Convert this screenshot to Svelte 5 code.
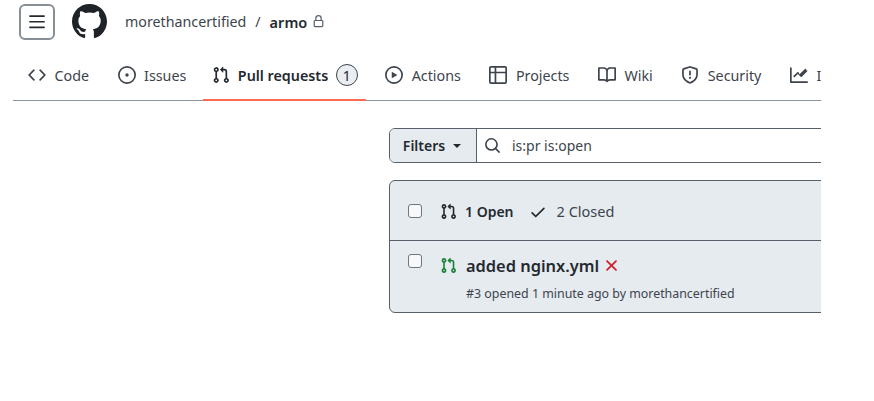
<script>
  const P = {
    code: "m11.28 3.22 4.25 4.25a.75.75 0 0 1 0 1.06l-4.25 4.25a.749.749 0 0 1-1.275-.326.749.749 0 0 1 .215-.734L13.94 8l-3.72-3.72a.749.749 0 0 1 .326-1.275.749.749 0 0 1 .734.215Zm-6.56 0a.751.751 0 0 1 1.042.018.751.751 0 0 1 .018 1.042L2.06 8l3.72 3.72a.749.749 0 0 1-.326 1.275.749.749 0 0 1-.734-.215L.47 8.53a.75.75 0 0 1 0-1.06Z",
    issue: "M8 9.5a1.5 1.5 0 1 0 0-3 1.5 1.5 0 0 0 0 3ZM8 0a8 8 0 1 1 0 16A8 8 0 0 1 8 0ZM1.5 8a6.5 6.5 0 1 0 13 0 6.5 6.5 0 0 0-13 0Z",
    pr: "M1.5 3.25a2.25 2.25 0 1 1 3 2.122v5.256a2.251 2.251 0 1 1-1.5 0V5.372A2.25 2.25 0 0 1 1.5 3.25Zm5.677-.177L9.573.677A.25.25 0 0 1 10 .854V2.5h1A2.5 2.5 0 0 1 13.5 5v5.628a2.251 2.251 0 1 1-1.5 0V5a1 1 0 0 0-1-1h-1v1.646a.25.25 0 0 1-.427.177L7.177 3.427a.25.25 0 0 1 0-.354ZM3.75 2.5a.75.75 0 1 0 0 1.5.75.75 0 0 0 0-1.5Zm0 9.5a.75.75 0 1 0 0 1.5.75.75 0 0 0 0-1.5Zm8.25.75a.75.75 0 1 0 1.5 0 .75.75 0 0 0-1.5 0Z",
    play: "M8 0a8 8 0 1 1 0 16A8 8 0 0 1 8 0ZM1.5 8a6.5 6.5 0 1 0 13 0 6.5 6.5 0 0 0-13 0Zm4.879-2.773 4.264 2.559a.25.25 0 0 1 0 .428l-4.264 2.559A.25.25 0 0 1 6 10.559V5.442a.25.25 0 0 1 .379-.215Z",
    table: "M0 1.75C0 .784.784 0 1.75 0h12.5C15.216 0 16 .784 16 1.75v12.5A1.75 1.75 0 0 1 14.25 16H1.75A1.75 1.75 0 0 1 0 14.25ZM6.5 6.5v8h7.75a.25.25 0 0 0 .25-.25V6.5Zm8-1.5V1.75a.25.25 0 0 0-.25-.25H6.5V5Zm-13 1.5v7.75c0 .138.112.25.25.25H5v-8ZM5 5V1.5H1.75a.25.25 0 0 0-.25.25V5Z",
    book: "M0 1.75A.75.75 0 0 1 .75 1h4.253c1.227 0 2.317.59 3 1.501A3.743 3.743 0 0 1 11.006 1h4.245a.75.75 0 0 1 .75.75v10.5a.75.75 0 0 1-.75.75h-4.507a2.25 2.25 0 0 0-1.591.659l-.622.621a.75.75 0 0 1-1.06 0l-.622-.621A2.25 2.25 0 0 0 5.258 13H.75a.75.75 0 0 1-.75-.75Zm7.251 10.324.004-5.073-.002-2.253A2.25 2.25 0 0 0 5.003 2.5H1.5v9h3.757a3.75 3.75 0 0 1 1.994.574ZM8.755 4.75l-.004 7.322a3.752 3.752 0 0 1 1.992-.572H14.5v-9h-3.495a2.25 2.25 0 0 0-2.25 2.25Z",
    shield: "M7.467.133a1.748 1.748 0 0 1 1.066 0l5.25 1.68A1.75 1.75 0 0 1 15 3.48V7c0 1.566-.32 3.182-1.303 4.682-.983 1.498-2.585 2.813-5.032 3.855a1.697 1.697 0 0 1-1.33 0c-2.447-1.042-4.049-2.357-5.032-3.855C1.32 10.182 1 8.566 1 7V3.48a1.75 1.75 0 0 1 1.217-1.667Zm.61 1.429a.25.25 0 0 0-.153 0l-5.25 1.68a.25.25 0 0 0-.174.238V7c0 1.358.275 2.666 1.057 3.86.784 1.194 2.121 2.34 4.366 3.297a.196.196 0 0 0 .154 0c2.245-.956 3.582-2.104 4.366-3.298C13.225 9.666 13.5 8.36 13.5 7V3.48a.251.251 0 0 0-.174-.237l-5.25-1.68ZM8.75 4.75v3a.75.75 0 0 1-1.5 0v-3a.75.75 0 0 1 1.5 0ZM9 10.5a1 1 0 1 1-2 0 1 1 0 0 1 2 0Z",
    graph: "M1.5 1.75V13.5h13.75a.75.75 0 0 1 0 1.5H.75a.75.75 0 0 1-.75-.75V1.75a.75.75 0 0 1 1.5 0Zm14.28 2.53-5.25 5.25a.75.75 0 0 1-1.06 0L7 7.06 4.28 9.78a.751.751 0 0 1-1.042-.018.751.751 0 0 1-.018-1.042l3.25-3.25a.75.75 0 0 1 1.06 0L8.5 7.44l4.72-4.72a.751.751 0 0 1 1.042.018.751.751 0 0 1 .018 1.042Z",
    lock: "M4 4a4 4 0 0 1 8 0v2h.25c.966 0 1.75.784 1.75 1.75v5.5A1.75 1.75 0 0 1 12.25 15h-8.5A1.75 1.75 0 0 1 2 13.25v-5.5C2 6.784 2.784 6 3.75 6H4Zm8.25 3.5h-8.5a.25.25 0 0 0-.25.25v5.5c0 .138.112.25.25.25h8.5a.25.25 0 0 0 .25-.25v-5.5a.25.25 0 0 0-.25-.25ZM10.5 6V4a2.5 2.5 0 1 0-5 0v2Z",
    github: "M8 0c4.42 0 8 3.58 8 8a8.013 8.013 0 0 1-5.45 7.59c-.4.08-.55-.17-.55-.38 0-.27.01-1.13.01-2.2 0-.75-.25-1.23-.54-1.48 1.78-.2 3.65-.88 3.65-3.95 0-.88-.31-1.59-.82-2.15.08-.2.36-1.02-.08-2.12 0 0-.67-.22-2.2.82-.64-.18-1.32-.27-2-.27-.68 0-1.36.09-2 .27-1.53-1.03-2.2-.82-2.2-.82-.44 1.1-.16 1.92-.08 2.12-.51.56-.82 1.28-.82 2.15 0 3.06 1.86 3.75 3.64 3.95-.23.2-.44.55-.51 1.07-.46.21-1.61.55-2.33-.66-.15-.24-.6-.83-1.23-.82-.67.01-.27.38.01.53.34.19.73.9.82 1.13.16.45.68 1.31 2.69.94 0 .67.01 1.3.01 1.49 0 .21-.15.45-.55.38A7.995 7.995 0 0 1 0 8c0-4.42 3.58-8 8-8Z",
    search: "M10.68 11.74a6 6 0 0 1-7.922-8.982 6 6 0 0 1 8.982 7.922l3.04 3.04a.749.749 0 0 1-.326 1.275.749.749 0 0 1-.734-.215ZM11.5 7a4.499 4.499 0 1 0-8.997 0A4.499 4.499 0 0 0 11.5 7Z",
    check: "M13.78 4.22a.75.75 0 0 1 0 1.06l-7.25 7.25a.75.75 0 0 1-1.06 0L2.22 9.28a.751.751 0 0 1 .018-1.042.751.751 0 0 1 1.042-.018L6 10.94l6.72-6.72a.75.75 0 0 1 1.06 0Z",
    x: "M3.72 3.72a.75.75 0 0 1 1.06 0L8 6.94l3.22-3.22a.749.749 0 0 1 1.275.326.749.749 0 0 1-.215.734L9.06 8l3.22 3.22a.749.749 0 0 1-.326 1.275.749.749 0 0 1-.734-.215L8 9.06l-3.22 3.22a.751.751 0 0 1-1.042-.018.751.751 0 0 1-.018-1.042L6.94 8 3.72 4.78a.75.75 0 0 1 0-1.06Z",
    bars: "M1 2.75A.75.75 0 0 1 1.75 2h12.5a.75.75 0 0 1 0 1.5H1.75A.75.75 0 0 1 1 2.75Zm0 5A.75.75 0 0 1 1.75 7h12.5a.75.75 0 0 1 0 1.5H1.75A.75.75 0 0 1 1 7.75ZM1.75 12h12.5a.75.75 0 0 1 0 1.5H1.75a.75.75 0 0 1 0-1.5Z"
  };
  const tabs = [
    { icon: "code", label: "Code" },
    { icon: "issue", label: "Issues" },
    { icon: "pr", label: "Pull requests", count: 1, active: true },
    { icon: "play", label: "Actions" },
    { icon: "table", label: "Projects" },
    { icon: "book", label: "Wiki" },
    { icon: "shield", label: "Security" },
    { icon: "graph", label: "Insights" }
  ];
</script>

{#snippet icon(name, size)}
  <svg class="ic" width={size} height={size} viewBox="0 0 16 16" fill="currentColor" aria-hidden="true"><path fill-rule="evenodd" d={P[name]} /></svg>
{/snippet}

<div class="page">
  <header class="top">
    <button class="menu">{@render icon("bars", 18)}</button>
    <span class="logo">{@render icon("github", 35)}</span>
    <nav class="crumbs">
      <span>morethancertified</span>
      <span class="sep">/</span>
      <strong>armo</strong>
      <span class="lock">{@render icon("lock", 13)}</span>
    </nav>
  </header>

  <nav class="tabs">
    {#each tabs as t}
      <div class="tab" class:active={t.active}>
        {@render icon(t.icon, 18)}
        <span class="label">{t.label}</span>
        {#if t.count}<span class="count">{t.count}</span>{/if}
      </div>
    {/each}
  </nav>

  <main class="main">
    <div class="filter">
      <button class="filters">Filters <i class="caret"></i></button>
      <div class="search">
        {@render icon("search", 17)}
        <span>is:pr is:open</span>
      </div>
    </div>

    <section class="box">
      <div class="head">
        <span class="cb"></span>
        <span class="pr">{@render icon("pr", 17)}</span>
        <strong class="open">1 Open</strong>
        <span class="chk">{@render icon("check", 18)}</span>
        <span class="closed">2 Closed</span>
      </div>
      <div class="row">
        <span class="cb"></span>
        <span class="pr green">{@render icon("pr", 17)}</span>
        <div class="body">
          <div class="title">
            <strong>added nginx.yml</strong>
            <span class="fail">{@render icon("x", 19)}</span>
          </div>
          <div class="meta">#3 opened 1 minute ago by morethancertified</div>
        </div>
      </div>
    </section>
  </main>
</div>

<style>
  :global(body) { margin: 0; background: #fff; }
  .page {
    width: 821px;
    height: 401px;
    overflow: hidden;
    font-family: "Noto Sans", "Open Sans", sans-serif;
    font-size: 14px;
    color: #24292f;
  }
  .ic { display: block; flex: none; }
  button { font: inherit; color: inherit; }

  .top { display: flex; align-items: center; height: 43px; padding: 0 0 0 19px; }
  .menu {
    width: 36px; height: 36px; padding: 0;
    display: flex; align-items: center; justify-content: center;
    background: #fff; border: 2px solid #868e96; border-radius: 6px;
  }
  .logo { margin-left: 17px; color: #1f2328; }
  .crumbs { display: flex; align-items: center; margin-left: 18px; font-size: 14.25px; color: #3d444d; }
  .sep { margin: 0 9px; }
  .crumbs strong { font-weight: 600; font-size: 14.5px; color: #24292f; }
  .lock { margin-left: 5px; color: #57606a; }

  .tabs {
    display: flex; gap: 8.5px;
    height: 58px; box-sizing: border-box;
    margin-left: 13px; padding-left: 5px;
    border-bottom: 1px solid #8c959f;
  }
  .tab {
    display: flex; align-items: center; gap: 8.5px;
    padding: 6px 10px 0; height: 58px; box-sizing: border-box;
    flex: none; font-size: 14.3px; color: #3d444d;
  }
  .tab.active {
    font-weight: 600; color: #24292f; border-bottom: 2px solid #fd6a52;
    gap: 7.5px; padding: 8px 8px 0 9px;
    margin-left: -1.5px; margin-right: 1px;
  }
  .count {
    width: 22px; height: 22px; box-sizing: border-box;
    display: flex; align-items: center; justify-content: center;
    border: 1px solid #3d444d; border-radius: 50%;
    background: #eaeef2; font-size: 14px; font-weight: 400;
  }

  .main { margin-left: 389px; margin-right: -30px; padding-top: 27px; }
  .filter {
    display: flex; height: 35px; box-sizing: border-box;
    border: 1px solid #57606a; border-radius: 6px; overflow: hidden;
  }
  .filters {
    width: 87px; flex: none; padding: 0 2px 0 0;
    display: flex; align-items: center; justify-content: center; gap: 8px;
    background: #e6ebf0; border: 0; border-right: 1px solid #57606a;
    font-weight: 600; font-size: 14px;
  }
  .caret { width: 0; height: 0; border: 4px solid transparent; border-top-color: #24292f; border-bottom: 0; }
  .search { flex: 1; display: flex; align-items: center; gap: 11px; padding-left: 7px; color: #3d444d; }

  .box {
    margin-top: 17px;
    background: #e6ebf0;
    border: 1px solid #57606a; border-radius: 6px;
  }
  .head {
    display: flex; align-items: center; height: 59px; padding-left: 18px;
    border-bottom: 1px solid #57606a;
  }
  .head .pr, .open, .chk { margin-top: 2px; }
  .cb {
    width: 14px; height: 14px; box-sizing: border-box; flex: none;
    background: #f6f8fa; border: 1px solid #6e7781; border-radius: 3px;
  }
  .pr { margin-left: 18px; color: #24292f; }
  .green { color: #1a7f37; }
  .open { margin-left: 8px; font-weight: 600; }
  .chk { margin-left: 15px; }
  .closed { margin-left: 10px; font-size: 14.5px; color: #3d444d; }

  .row { display: flex; align-items: flex-start; height: 71px; padding-left: 18px; }
  .row .cb { margin-top: 13px; }
  .row .pr { margin-top: 16px; }
  .body { margin-left: 9px; }
  .title { display: flex; align-items: center; margin-top: 13px; gap: 3px; font-size: 16.4px; }
  .title strong { font-weight: 600; }
  .fail { color: #cf222e; }
  .meta { margin-top: 8px; font-size: 12.4px; color: #3d444d; }
</style>
